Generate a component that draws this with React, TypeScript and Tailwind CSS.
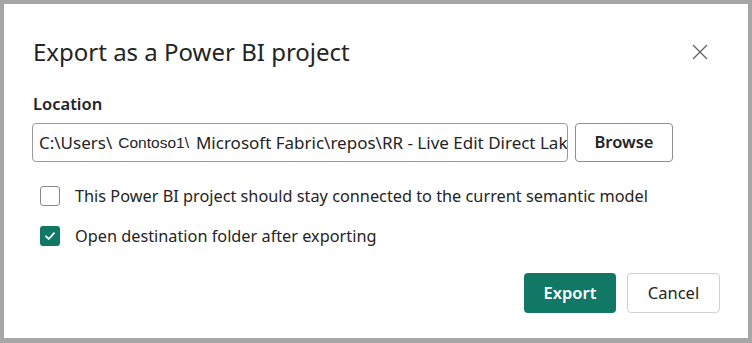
import React from "react";

export default function App() {
  const font = { fontFamily: '"Segoe UI", "Noto Sans", "Open Sans", sans-serif' };
  return (
    <div className="w-[752px] h-[343px] bg-[#a6a6a6] pl-[4px] pt-[4px] pr-[4px] pb-[5px]">
      <div className="w-full h-full bg-white pl-[28px] pr-[28px] pt-[32px] text-[#242424] font-['Noto_Sans',sans-serif]" style={font}>
        <div className="flex items-start justify-between">
          <h1 className="text-[24px] leading-[32px] pl-[1px] font-normal">Export as a Power BI project</h1>
          <button className="mt-[8px] mr-[12px] text-[#616161]" aria-label="Close">
            <svg width="16" height="16" viewBox="0 0 16 16" fill="none" stroke="currentColor" strokeWidth="1.3">
              <path d="M1 1 L15 15 M15 1 L1 15" />
            </svg>
          </button>
        </div>
        <div className="mt-[25px] text-[16.5px] leading-[22px] font-semibold pl-[1px]">Location</div>
        <div className="mt-[8px] flex gap-[7px] items-start">
          <div className="w-[536px] h-[39px] border border-[#9a9a9a] rounded-[4px] flex items-center pl-[6px] overflow-hidden whitespace-nowrap text-[17px] text-[#242424]">
            <span>C:\Users\</span>
            <span className="font-['Liberation_Sans',sans-serif] text-[15.5px] ml-[6px]">Contoso1\</span>
            <span className="ml-[5px] w-[2px] h-[19px] bg-[#d0d0d0] mr-[2px]"></span>
            <span>Microsoft Fabric\repos\RR - Live Edit Direct Lake</span>
          </div>
          <button className="w-[98px] h-[39px] border border-[#8f8f8f] rounded-[4px] text-[16.5px] font-semibold flex items-center justify-center">
            Browse
          </button>
        </div>
        <div className="mt-[24px] flex flex-col gap-[20px] pl-[8px]">
          <label className="flex items-center gap-[15px] h-[20px] text-[16.3px]">
            <span className="w-[20px] h-[20px] rounded-[3px] border border-[#8a8a8a] bg-white"></span>
            <span>This Power BI project should stay connected to the current semantic model</span>
          </label>
          <label className="flex items-center gap-[15px] h-[20px] text-[16.3px]">
            <span className="w-[20px] h-[20px] rounded-[3px] bg-[#117865] flex items-center justify-center">
              <svg width="12" height="12" viewBox="0 0 12 12" fill="none" stroke="white" strokeWidth="1.8" strokeLinecap="round" strokeLinejoin="round">
                <path d="M2 6.3 L4.8 9 L10 3.2" />
              </svg>
            </span>
            <span>Open destination folder after exporting</span>
          </label>
        </div>
        <div className="mt-[27px] flex justify-end gap-[11px]">
          <button className="w-[92px] h-[40px] rounded-[4px] bg-[#117865] text-white text-[16.5px] font-semibold">Export</button>
          <button className="w-[93px] h-[40px] rounded-[4px] border border-[#d1d1d1] bg-white text-[16.5px]">Cancel</button>
        </div>
      </div>
    </div>
  );
}
